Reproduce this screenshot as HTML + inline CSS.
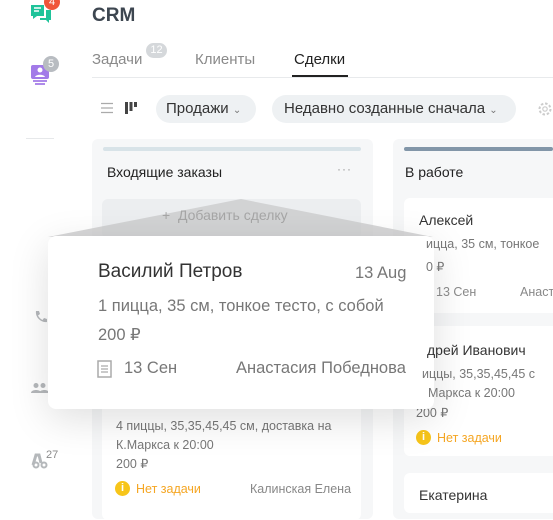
<!DOCTYPE html><html><head><meta charset="utf-8"><style>
*{margin:0;padding:0;box-sizing:border-box}
body{width:553px;height:505px;overflow:hidden;background:#fff;font-family:"Liberation Sans",sans-serif;position:relative;color:#333}
.a{position:absolute;white-space:nowrap}
.col{position:absolute;background:#f6f7f8;border-radius:6px}
.card{position:absolute;background:#fff;border-radius:6px}
.g{color:#8a8a8a}
.pill{position:absolute;background:#eef1f3;border-radius:15px;height:28px;font-size:15px;color:#333;line-height:28px;padding-left:10px}
.t{z-index:5}
</style></head><body>
<!-- sidebar -->
<svg class="a" style="left:30px;top:4px" width="22" height="22" viewBox="0 0 22 22"><path d="M1 1h13v11H7l-4 3v-3H1z" fill="#1fc39a"/><path d="M4 4h7M4 7h5" stroke="#fff" stroke-width="1.6"/><path d="M16 6h5v10h-2v3l-3-3h-6v-2h6z" fill="#1fc39a"/></svg>
<div class="a" style="left:44px;top:-6px;width:16px;height:16px;border-radius:8px;background:#f0563a;color:#fff;font-size:11px;text-align:center;line-height:16px">4</div>
<svg class="a" style="left:30px;top:64px" width="20" height="22" viewBox="0 0 20 22"><rect x="1" y="1" width="18" height="14" rx="2" fill="#a27ae8"/><circle cx="10" cy="6" r="2.5" fill="#fff"/><path d="M5 13c1-3 9-3 10 0z" fill="#fff"/><path d="M3 17h14M5 20h10" stroke="#a27ae8" stroke-width="1.8"/></svg>
<div class="a" style="left:43px;top:56px;width:16px;height:16px;border-radius:8px;background:#b8bcc1;color:#fff;font-size:11px;text-align:center;line-height:16px">5</div>
<div class="a" style="left:26px;top:138px;width:28px;height:1px;background:#e6e8ea"></div>
<svg class="a" style="left:34px;top:310px" width="14" height="14" viewBox="0 0 14 14"><path d="M2 1l3 0 1 3-2 1.5c1 2 2.5 3.5 4.5 4.5L10 8l3 1v3c-6 1-12-5-11-11z" fill="#b5b8bb"/></svg>
<svg class="a" style="left:31px;top:382px" width="18" height="14" viewBox="0 0 18 14"><circle cx="5" cy="3.5" r="2.5" fill="#b5b8bb"/><circle cx="12" cy="3.5" r="2.5" fill="#b5b8bb"/><path d="M0 11c0-4 10-4 10 0zM8 11c1-4 10-4 10 0z" fill="#b5b8bb"/></svg>
<svg class="a" style="left:31px;top:453px" width="18" height="16" viewBox="0 0 18 16"><path d="M2 12l3-10h3l2 8" stroke="#b5b8bb" stroke-width="3" fill="none"/><circle cx="5" cy="12" r="2.5" fill="none" stroke="#b5b8bb" stroke-width="2"/><circle cx="13" cy="12" r="2.5" fill="none" stroke="#b5b8bb" stroke-width="2"/></svg>
<div class="a g" style="left:46px;top:449px;font-size:11px">27</div>
<!-- header -->
<div class="a" style="left:92px;top:5px;font-size:19px;font-weight:bold;color:#3d4650">CRM</div>
<div class="a g" style="left:92px;top:51px;font-size:15px">Задачи</div>
<div class="a" style="left:146px;top:43px;width:21px;height:15px;border-radius:8px;background:#d5d8db;color:#fff;font-size:11px;text-align:center;line-height:15px">12</div>
<div class="a g" style="left:195px;top:51px;font-size:15px">Клиенты</div>
<div class="a" style="left:294px;top:51px;font-size:15px;color:#222">Сделки</div>
<div class="a" style="left:92px;top:77px;width:461px;height:1px;background:#e8eaec"></div>
<div class="a" style="left:292px;top:75px;width:56px;height:2px;background:#222"></div>
<svg class="a" style="left:101px;top:102px" width="12" height="12" viewBox="0 0 12 12"><path d="M0 1.5h12M0 6h12M0 10.5h12" stroke="#aaa" stroke-width="1.3"/></svg>
<svg class="a" style="left:125px;top:101px" width="13" height="13" viewBox="0 0 13 13"><rect x="0" y="1" width="3" height="12" fill="#444"/><rect x="4.5" y="1" width="3" height="9" fill="#444"/><rect x="9" y="1" width="3" height="5" fill="#444"/></svg>
<div class="pill" style="left:156px;top:95px;width:100px">Продажи <span style="font-size:10px;color:#777">&#8964;</span></div>
<div class="pill" style="left:272px;top:95px;width:244px;padding-left:12px">Недавно созданные сначала <span style="font-size:10px;color:#777">&#8964;</span></div>
<svg class="a" style="left:537px;top:101px" width="16" height="16" viewBox="0 0 16 16"><circle cx="8" cy="8" r="5.5" fill="none" stroke="#ccc" stroke-width="2" stroke-dasharray="2.5 1.8"/><circle cx="8" cy="8" r="2.2" fill="none" stroke="#ccc" stroke-width="1.2"/></svg>
<!-- column 1 -->
<div class="col" style="left:92px;top:139px;width:281px;height:380px"></div>
<div class="a" style="left:103px;top:147px;width:258px;height:4px;border-radius:2px;background:#d8e3e8"></div>
<div class="a" style="left:107px;top:164px;font-size:14px;color:#222">Входящие заказы</div>
<div class="a" style="left:337px;top:162px;font-size:12px;color:#999;letter-spacing:1px">···</div>
<div class="a" style="left:102px;top:199px;width:259px;height:40px;border-radius:6px;background:#eceef0"></div>
<div class="card" style="left:102px;top:400px;width:259px;height:120px"></div>
<div class="a" style="left:116px;top:417px;font-size:12.5px;color:#777;line-height:19px">4 пиццы, 35,35,45,45 см, доставка на<br>К.Маркса к 20:00<br>200 ₽</div>
<div class="a" style="left:115px;top:481px;width:15px;height:15px;border-radius:8px;background:#f7c51a;color:#fff;font-size:11px;font-weight:bold;text-align:center;line-height:15px">i</div>
<div class="a" style="left:136px;top:482px;font-size:12.5px;color:#f5a623">Нет задачи</div>
<div class="a" style="left:250px;top:482px;font-size:12.5px;color:#888">Калинская Елена</div>
<!-- column 2 -->
<div class="col" style="left:393px;top:139px;width:170px;height:380px"></div>
<div class="a" style="left:404px;top:147px;width:149px;height:4px;border-radius:2px;background:#8296a8"></div>
<div class="a" style="left:405px;top:164px;font-size:14px;color:#222">В работе</div>
<div class="card" style="left:404px;top:198px;width:160px;height:115px"></div>
<div class="a" style="left:419px;top:212px;font-size:14px;color:#333">Алексей</div>
<div class="a t" style="left:426px;top:237px;font-size:12.5px;color:#777">ицца, 35 см, тонкое</div>
<div class="a t" style="left:426px;top:259px;font-size:12.5px;color:#777">0 ₽</div>
<div class="a t" style="left:436px;top:285px;font-size:12.5px;color:#888">13 Сен</div>
<div class="a" style="left:520px;top:285px;font-size:12.5px;color:#888">Анаст</div>
<div class="card" style="left:404px;top:326px;width:160px;height:130px"></div>
<div class="a t" style="left:427px;top:342px;font-size:14px;color:#333">дрей Иванович</div>
<div class="a t" style="left:422px;top:367px;font-size:12.5px;color:#777">иццы, 35,35,45,45 с</div>
<div class="a t" style="left:428px;top:386px;font-size:12.5px;color:#777">Маркса к 20:00</div>
<div class="a" style="left:416px;top:405px;font-size:12.5px;color:#777">200 ₽</div>
<div class="a" style="left:416px;top:430px;width:15px;height:15px;border-radius:8px;background:#f7c51a;color:#fff;font-size:11px;font-weight:bold;text-align:center;line-height:15px">i</div>
<div class="a" style="left:437px;top:431px;font-size:12.5px;color:#f5a623">Нет задачи</div>
<div class="card" style="left:404px;top:473px;width:160px;height:40px"></div>
<div class="a" style="left:419px;top:487px;font-size:14px;color:#333">Екатерина</div>
<!-- shadow trapezoid -->
<svg class="a" style="left:0;top:0" width="553" height="505"><polygon points="48,237 241,199 433,237" fill="#c9cacb" opacity="0.75"/></svg>
<div class="a" style="left:162px;top:207px;font-size:14px;color:#a6a6a6">+&nbsp; Добавить сделку</div>
<!-- popup -->
<div class="a" style="left:48px;top:236px;width:386px;height:173px;background:#fff;border-radius:8px;box-shadow:0 10px 40px rgba(0,0,0,0.13)"></div>
<div class="a" style="left:98px;top:261px;font-size:19px;color:#333">Василий Петров</div>
<div class="a" style="left:355px;top:264px;font-size:16.5px;color:#777">13 Aug</div>
<div class="a" style="left:98px;top:292px;font-size:16.5px;color:#777;line-height:29px">1 пицца, 35 см, тонкое тесто, с собой<br>200 ₽</div>
<svg class="a" style="left:97px;top:360px" width="15" height="18" viewBox="0 0 15 18"><rect x="1" y="1" width="13" height="16" fill="none" stroke="#aaa" stroke-width="1.5"/><path d="M4 6h7M4 9h7M4 12h7" stroke="#aaa" stroke-width="1.3"/></svg>
<div class="a" style="left:124px;top:359px;font-size:16.5px;color:#777">13 Сен</div>
<div class="a" style="left:236px;top:359px;font-size:16.5px;color:#777">Анастасия Победнова</div>
</body></html>
